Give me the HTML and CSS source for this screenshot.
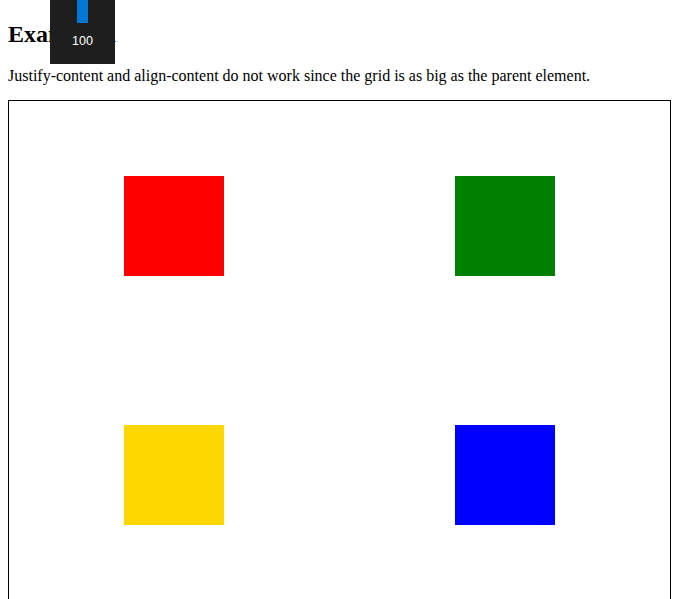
FILE: index.html
```html
<!DOCTYPE html>
<html>
<head>
<meta charset="utf-8">
<link rel="stylesheet" href="styles.css">
</head>
<body>
<h2 class="title">Example 1</h2>
<p class="desc">Justify-content and align-content do not work since the grid is as big as the parent element.</p>
<div class="grid">
  <div class="cell"><div class="box red"></div></div>
  <div class="cell"><div class="box green"></div></div>
  <div class="cell"><div class="box gold"></div></div>
  <div class="cell"><div class="box blue"></div></div>
</div>
<div class="meter">
  <div class="meter-bar"></div>
  <div class="meter-label">100</div>
</div>
</body>
</html>
```
FILE: styles.css
```css
html {
  overflow: hidden;
}
body {
  margin: 8px 5px 8px 8px;
  font-family: "Liberation Serif", "Times New Roman", serif;
  font-size: 16px;
  color: #000;
  background: #fff;
}
.title {
  font-size: 24px;
  font-weight: bold;
  margin: 12.5px 0 19.92px;
}
.desc {
  margin: 16px 0 15px;
}
.grid {
  display: grid;
  grid-template-columns: 1fr 1fr;
  grid-template-rows: 249px 249px;
  border: 1px solid #000;
}
.cell {
  display: flex;
  align-items: center;
  justify-content: center;
}
.box {
  width: 100px;
  height: 100px;
}
.red { background: #ff0000; }
.green { background: #008000; }
.gold { background: #ffd700; }
.blue { background: #0000ff; }
.meter {
  position: absolute;
  left: 50px;
  top: 0;
  width: 65px;
  height: 64px;
  background: #1e1e1e;
  display: flex;
  flex-direction: column;
  align-items: center;
}
.meter-bar {
  width: 11px;
  height: 23px;
  background: #0078d4;
}
.meter-label {
  margin-top: 11px;
  font-family: "Liberation Sans", Arial, sans-serif;
  font-size: 12.5px;
  line-height: 14px;
  color: #fff;
}
```
